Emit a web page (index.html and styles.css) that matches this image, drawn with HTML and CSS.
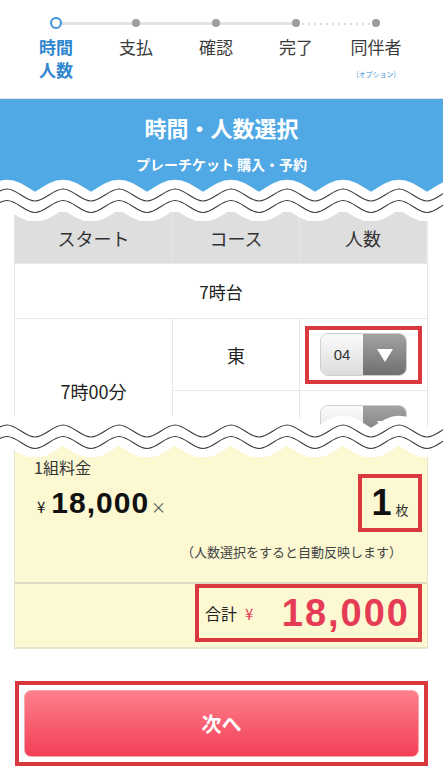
FILE: index.html
```html
<!DOCTYPE html>
<html lang="ja">
<head>
    <meta charset="UTF-8">
    <meta name="viewport" content="width=device-width, initial-scale=1.0">
    <title>時間・人数選択</title>
    <link rel="stylesheet" href="styles.css">
</head>
<body>
    <!-- Steps -->
    <ol class="steps">
        <li class="step current"><span class="dot"></span><span class="step-name">時間<br>人数</span></li>
        <li class="step"><span class="dot"></span><span class="step-name">支払</span></li>
        <li class="step"><span class="dot"></span><span class="step-name">確認</span></li>
        <li class="step to-option"><span class="dot"></span><span class="step-name">完了</span></li>
        <li class="step"><span class="dot"></span><span class="step-name">同伴者</span><small class="step-note">(オプション)</small></li>
    </ol>

    <header class="banner">
        <h1>時間・人数選択</h1>
        <p>プレーチケット 購入・予約</p>
    </header>

    <svg class="tear" viewBox="0 0 443 42" aria-hidden="true">
        <defs>
            <path id="wave" d="M -49 10 c 10 0 18 12 28 12 s 18 -12 28 -12 s 18 12 28 12 s 18 -12 28 -12 s 18 12 28 12 s 18 -12 28 -12 s 18 12 28 12 s 18 -12 28 -12 s 18 12 28 12 s 18 -12 28 -12 s 18 12 28 12 s 18 -12 28 -12 s 18 12 28 12 s 18 -12 28 -12 s 18 12 28 12 s 18 -12 28 -12 s 18 12 28 12 s 18 -12 28 -12 s 18 12 28 12 s 18 -12 28 -12"/>
        </defs>
        <use href="#wave" class="band" transform="translate(0 5.75)"/>
        <use href="#wave" class="line"/>
        <use href="#wave" class="line" transform="translate(0 11.5)"/>
    </svg>

    <div class="table-cut">
        <div class="table">
            <div class="cell head">スタート</div>
            <div class="cell head">コース</div>
            <div class="cell head">人数</div>

            <div class="cell hour">7時台</div>

            <div class="cell start">7時00分</div>
            <div class="cell course">東</div>
            <div class="cell count">
                <div class="mark">
                    <div class="select"><span class="select-val">04</span><span class="select-btn"></span></div>
                </div>
            </div>
            <div class="cell course"></div>
            <div class="cell count">
                <div class="select"><span class="select-val"></span><span class="select-btn"></span></div>
            </div>
        </div>
    </div>

    <svg class="tear tear-low" viewBox="0 0 443 42" aria-hidden="true">
        <use href="#wave" class="band" transform="translate(0 5.75)"/>
        <use href="#wave" class="line"/>
        <use href="#wave" class="line" transform="translate(0 11.5)"/>
    </svg>

    <section class="fee">
        <div class="fee-main">
            <div class="fee-label">1組料金</div>
            <div class="fee-row">
                <div class="unit-price"><span class="yen">¥</span><span class="num">18,000</span><span class="times">×</span></div>
                <div class="qty"><span class="qty-num">1</span><span class="qty-unit">枚</span></div>
            </div>
            <p class="fee-note">（人数選択をすると自動反映します）</p>
        </div>
        <div class="fee-total">
            <div class="total-box">
                <span class="total-label">合計</span>
                <span class="total-yen">¥</span>
                <span class="total-num">18,000</span>
            </div>
        </div>
    </section>

    <div class="next-wrap">
        <button class="next" type="button">次へ</button>
    </div>
</body>
</html>
```

FILE: styles.css
```css
body {
    margin: 0;
    background: #fff;
    color: #333;
    font-family: "Noto Sans CJK JP", "Noto Sans", sans-serif;
}

/* steps */
.steps {
    list-style: none;
    margin: 0;
    padding: 17px 27px 0 16px;
    height: 99px;
    box-sizing: border-box;
    border-bottom: 1px solid #e4e4e4;
    display: grid;
    grid-template-columns: repeat(5, 1fr);
}
.step {
    position: relative;
    display: flex;
    flex-direction: column;
    align-items: center;
}
.step:not(:last-child)::after {
    content: '';
    position: absolute;
    top: 5px;
    left: 50%;
    width: 100%;
    height: 3px;
    background: #e2e2e2;
}
.step.to-option::after {
    top: 6px;
    height: 2px;
    background: repeating-linear-gradient(90deg, #dcdcdc 0 2px, transparent 2px 6px);
}
.dot {
    position: relative;
    z-index: 1;
    width: 8px;
    height: 8px;
    margin: 2px 0 8px;
    border-radius: 50%;
    background: #9d9d9d;
}
.current .dot {
    width: 12px;
    height: 12px;
    margin: 0 0 6px;
    box-sizing: border-box;
    border: 2px solid #3d92d9;
    background: #fff;
}
.step-name {
    font-size: 17px;
    line-height: 23px;
    color: #3a3a3a;
    text-align: center;
}
.current .step-name {
    color: #2f86cf;
    font-weight: bold;
}
.step-note {
    margin-top: 11px;
    font-size: 7px;
    line-height: 10px;
    color: #3d8fd6;
}

/* banner */
.banner {
    height: 95px;
    box-sizing: border-box;
    padding-top: 13px;
    background: #50a8e4;
    color: #fff;
    text-align: center;
}
.banner h1 {
    margin: 0;
    font-size: 22px;
    line-height: 30px;
}
.banner p {
    margin: 11px 0 0;
    font-size: 14px;
    line-height: 22px;
    font-weight: bold;
}

/* torn edge */
.tear {
    position: relative;
    z-index: 2;
    display: block;
    width: 443px;
    height: 42px;
    margin: -15px 0 -9px;
}
.tear-low {
    margin: -17px 0 -18px;
}
.tear .band {
    fill: none;
    stroke: #fff;
    stroke-width: 30;
}
.tear .line {
    fill: none;
    stroke: #3c3c3c;
    stroke-width: 1.1;
}

/* table */
.table-cut {
    height: 220px;
    overflow: hidden;
    margin: 0 15px 0 14px;
}
.table {
    display: grid;
    grid-template-columns: 158px 127px 1fr;
    border-left: 1px solid #e6e6e6;
    border-right: 1px solid #e6e6e6;
    font-size: 18px;
    color: #222;
}
.cell {
    display: flex;
    align-items: center;
    justify-content: center;
    border-bottom: 1px solid #e8e8e8;
    box-sizing: border-box;
}
.cell:not(.count):not(.hour) {
    border-right: 1px solid #e8e8e8;
}
.head {
    height: 52px;
    background: #dedede;
    color: #333;
    border-bottom-color: #e9e9e9;
}
.hour {
    grid-column: 1 / -1;
    height: 55px;
    font-size: 17px;
}
.start {
    grid-row: span 2;
}
.course,
.count {
    height: 72px;
}
.mark {
    width: 117px;
    height: 58px;
    box-sizing: border-box;
    border: 4px solid #d9383e;
    display: flex;
    align-items: center;
    justify-content: center;
}
.select {
    display: flex;
    width: 87px;
    height: 43px;
    box-sizing: border-box;
    border: 1px solid #cfcfcf;
    border-radius: 8px;
    overflow: hidden;
}
.select-val {
    width: 42px;
    display: flex;
    align-items: center;
    justify-content: center;
    font-family: "Liberation Sans", sans-serif;
    font-size: 15px;
    color: #333;
    background: linear-gradient(#fbfbfb, #dcdcdc);
}
.select-btn {
    flex: 1;
    position: relative;
    background: linear-gradient(#a3a3a3, #6f6f6f);
}
.select-btn::after {
    content: '';
    position: absolute;
    left: 50%;
    top: 50%;
    margin: -6px 0 0 -8px;
    border-left: 8px solid transparent;
    border-right: 8px solid transparent;
    border-top: 13px solid #fff;
}

/* fee */
.fee {
    margin: 0 15px 0 14px;
    background: #fbf8d2;
    border: 1px solid #e7e5cf;
    border-top: 0;
    border-bottom-width: 2px;
}
.fee-main {
    padding: 17px 5px 20px 19px;
}
.fee-label {
    font-size: 16px;
    line-height: 22px;
    color: #333;
}
.fee-row {
    display: flex;
    align-items: center;
    justify-content: space-between;
    margin-top: -4px;
}
.unit-price {
    display: flex;
    align-items: baseline;
    margin-left: 3px;
    color: #111;
}
.yen,
.times {
    font-size: 15px;
}
.unit-price .num {
    margin-left: 6px;
    font-family: "Liberation Sans", sans-serif;
    font-size: 30px;
    font-weight: bold;
    letter-spacing: 1px;
}
.times {
    margin-left: 2px;
    color: #555;
}
.qty {
    width: 64px;
    height: 58px;
    box-sizing: border-box;
    border: 4px solid #d9383e;
    display: flex;
    align-items: baseline;
    justify-content: center;
    padding-top: 2px;
}
.qty-num {
    font-family: "Liberation Sans", sans-serif;
    font-size: 36px;
    line-height: 46px;
    font-weight: bold;
    color: #111;
}
.qty-unit {
    margin-left: 4px;
    font-size: 13px;
}
.fee-note {
    margin: 10px 0 0;
    padding-right: 20px;
    text-align: right;
    font-size: 13px;
    line-height: 20px;
    color: #444;
}
.fee-total {
    display: flex;
    justify-content: flex-end;
    padding: 0 5px 5px;
    border-top: 2px solid #dfdcc6;
}
.total-box {
    width: 227px;
    height: 58px;
    box-sizing: border-box;
    border: 4px solid #d9383e;
    display: flex;
    align-items: center;
    padding: 0 8px 0 6px;
}
.total-label {
    font-size: 16px;
    color: #222;
}
.total-yen {
    margin-left: 8px;
    font-size: 15px;
    color: #e63b55;
}
.total-num {
    margin-left: auto;
    font-family: "Liberation Sans", sans-serif;
    font-size: 38px;
    font-weight: bold;
    letter-spacing: 2px;
    color: #e63b55;
}

/* next button */
.next-wrap {
    margin: 32px 15px 0;
    height: 85px;
    box-sizing: border-box;
    border: 4px solid #d9383e;
    padding: 5px;
}
.next {
    display: block;
    width: 100%;
    height: 100%;
    border: 1px solid #f8a5ae;
    border-radius: 7px;
    background: linear-gradient(#fd808c, #f33f57);
    color: #fff;
    font-family: "Noto Sans CJK JP", sans-serif;
    font-size: 20px;
    font-weight: bold;
}
```
